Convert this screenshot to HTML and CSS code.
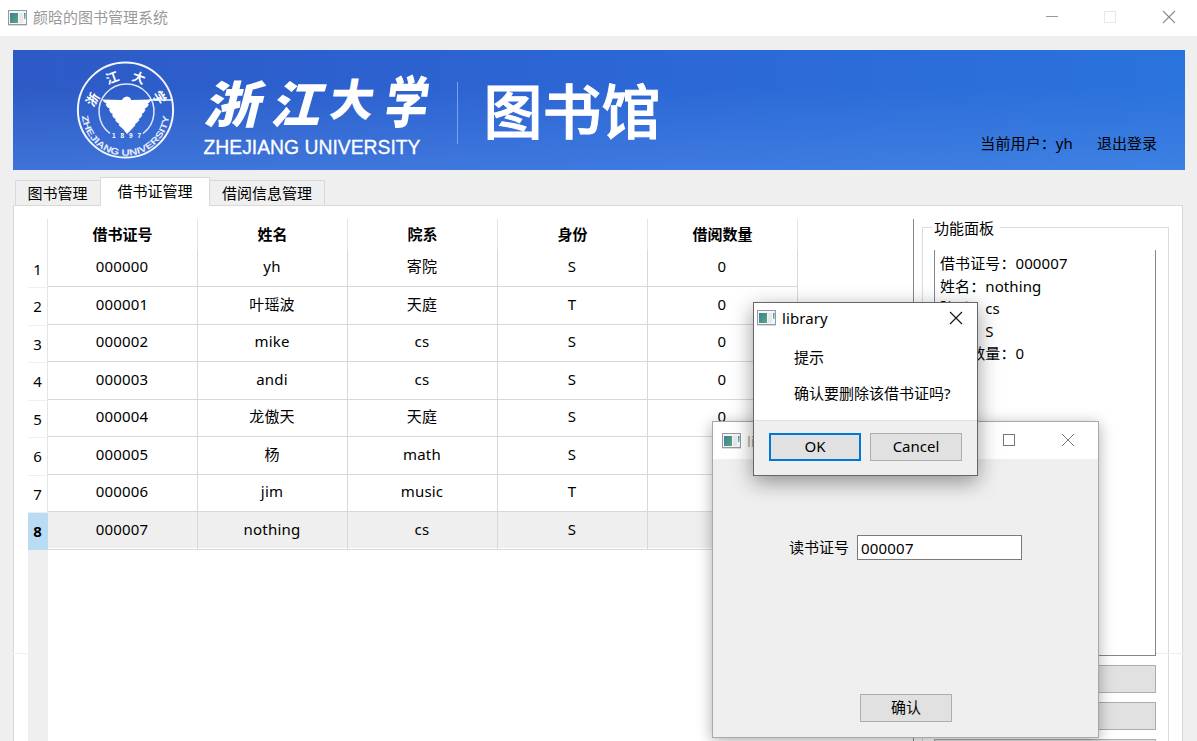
FILE: index.html
```html
<!DOCTYPE html>
<html lang="zh-CN">
<head>
<meta charset="utf-8">
<title>颜晗的图书管理系统</title>
<link rel="stylesheet" href="styles.css">
</head>
<body>
<svg class="defs" width="0" height="0">
  <defs>
    <linearGradient id="pane" x1="0" y1="0" x2="1" y2="1"><stop offset="0" stop-color="#3c7f9c"/><stop offset="1" stop-color="#5ca679"/></linearGradient>
    <linearGradient id="bar" x1="0" y1="0" x2="0" y2="1"><stop offset="0" stop-color="#3f86b8"/><stop offset="1" stop-color="#78c29a"/></linearGradient>
    <symbol id="app-icon" viewBox="0 0 19 16">
      <rect x="0.5" y="0.5" width="18" height="14" fill="#f5f6f8" stroke="#9299a5"/>
      <rect x="0" y="15" width="19" height="1" fill="#d9dbdf"/>
      <rect x="2" y="3" width="8" height="10" fill="url(#pane)"/>
      <rect x="11" y="3" width="4" height="10" fill="#e6e8ea"/>
      <rect x="16" y="3" width="1.5" height="6" fill="url(#bar)"/>
    </symbol>
  </defs>
</svg>
<div class="app">
  <header class="titlebar">
    <svg class="app-icon"><use href="#app-icon"/></svg>
    <span class="title">颜晗的图书管理系统</span>
    <svg class="controls" width="140" height="36" fill="none">
      <path d="M6 16.5h12" stroke="#999"/>
      <rect x="64.500" y="11.500" width="11" height="11" stroke="#e8e8e8"/>
      <path d="M123 11l12 12M135 11l-12 12" stroke="#8c8c8c" stroke-width="1.1"/>
    </svg>
  </header>
  <main class="content">
    <section class="banner">
      <svg class="logo" width="700" height="120" fill="#fff">
        <defs><path id="ring" d="M68.700 62A43.800 43.800 0 0 0 156.300 62"/></defs>
        <circle cx="112.500" cy="60" r="47.600" fill="none" stroke="#f3f6fc" stroke-width="2"/>
        <path d="M97 83.500A27.500 27.500 0 1 1 130 83.500" fill="none" stroke="#dfe8f9" stroke-width="1.500"/>
        <path d="M89 49.500L109 50Q110 47 114 46.500Q118 47 118 50L138 49.500Q137 53 134.500 54L136 54.500Q134 58 131.500 59L132.500 60Q131 63 128.500 64L129.500 65Q128 68 125.500 69L126.500 70Q124 73 122 74L122.500 75L118 80L114 84L110 79L105.500 75L106.500 74Q103 72 102 70L103 69Q100 68 99 65L100 64Q97 63 96 60L97 59Q94 58 92.500 54.500L94 54Q91 53 89 49.500Z"/>
        <path d="M136 50h24" stroke="#fff" stroke-width="1.500"/>
        <text class="ring-text"><textPath href="#ring" startOffset="4" textLength="129" lengthAdjust="spacingAndGlyphs">ZHEJIANG UNIVERSITY</textPath></text>
        <g class="ring-han">
          <text transform="translate(79 49) rotate(-58)" text-anchor="middle" dominant-baseline="central">浙</text>
          <text transform="translate(99 27) rotate(-20)" text-anchor="middle" dominant-baseline="central">江</text>
          <text transform="translate(126 27) rotate(20)" text-anchor="middle" dominant-baseline="central">大</text>
          <text transform="translate(147 47) rotate(58)" text-anchor="middle" dominant-baseline="central">学</text>
        </g>
        <text class="year" x="99" y="88" textLength="29">1897</text>
        <g class="brush">
          <text transform="translate(190 73) skewX(-14) scale(1.120 1)">浙</text>
          <text transform="translate(256 73) skewX(-16)">江</text>
          <text transform="translate(315 66) skewX(-8)" class="brush-small">大</text>
          <text transform="translate(370 73) skewX(-8) scale(.86 1.120)">学</text>
        </g>
        <text class="latin" x="190.500" y="104" textLength="217" lengthAdjust="spacingAndGlyphs">ZHEJIANG UNIVERSITY</text>
        <rect x="444" y="32" width="1" height="62" fill="#7ba3ea"/>
        <text class="library" x="470.500" y="83.500" textLength="177">图书馆</text>
      </svg>
      <div class="user"><span>当前用户：yh</span><span>退出登录</span></div>
    </section>
    <nav class="tabs">
      <div class="tab tab-books">图书管理</div>
      <div class="tab active">借书证管理</div>
      <div class="tab tab-loans">借阅信息管理</div>
    </nav>
    <section class="pane">
      <i class="seam seam-left"></i><i class="seam seam-right"></i>
      <div class="table">
        <div class="index">
          <div class="corner"></div>
          <div>1</div><div class="tall">2</div><div>3</div><div class="tall">4</div><div>5</div><div class="tall">6</div><div>7</div><div class="current">8</div>
          <div class="rest"></div>
        </div>
        <div class="grid">
          <div class="row head"><b>借书证号</b><b>姓名</b><b>院系</b><b>身份</b><b>借阅数量</b></div>
          <div class="row"><span>000000</span><span>yh</span><span>寄院</span><span>S</span><span>0</span></div>
          <div class="row tall"><span>000001</span><span>叶瑶波</span><span>天庭</span><span>T</span><span>0</span></div>
          <div class="row"><span>000002</span><span>mike</span><span>cs</span><span>S</span><span>0</span></div>
          <div class="row tall"><span>000003</span><span>andi</span><span>cs</span><span>S</span><span>0</span></div>
          <div class="row"><span>000004</span><span>龙傲天</span><span>天庭</span><span>S</span><span>0</span></div>
          <div class="row tall"><span>000005</span><span>杨</span><span>math</span><span>S</span><span>0</span></div>
          <div class="row"><span>000006</span><span>jim</span><span>music</span><span>T</span><span>0</span></div>
          <div class="row tall selected"><span>000007</span><span>nothing</span><span>cs</span><span>S</span><span>0</span></div>
        </div>
      </div>
      <aside class="panel">
        <h2 class="legend">功能面板</h2>
        <div class="details">
          <p>借书证号：000007</p><p>姓名：nothing</p><p>院系：cs</p><p>身份：S</p><p>借阅数量：0</p>
        </div>
        <div class="button"></div><div class="button"></div><div class="button"></div>
      </aside>
    </section>
  </main>

  <div class="window form-window">
    <div class="window-bar">
      <svg class="app-icon"><use href="#app-icon"/></svg><span class="window-title">library</span>
      <svg class="window-controls" width="100" height="37" fill="none" stroke="#777"><rect x="5.500" y="12.500" width="11" height="11"/><path d="M64 12l12 12M76 12l-12 12"/></svg>
    </div>
    <div class="form-row"><label>读书证号</label><div class="input">000007</div></div>
    <div class="button confirm">确认</div>
  </div>

  <div class="window message">
    <div class="message-bar">
      <svg class="app-icon"><use href="#app-icon"/></svg><span>library</span>
      <svg class="close" width="14" height="14" stroke="#111" stroke-width="1.100"><path d="M1 1l12 12M13 1L1 13"/></svg>
    </div>
    <p class="message-title">提示</p>
    <p class="message-text">确认要删除该借书证吗?</p>
    <div class="actions"><div class="button primary">OK</div><div class="button">Cancel</div></div>
  </div>
</div>
</body>
</html>
```

FILE: styles.css
```css
* { box-sizing: border-box; }
body { margin: 0; font: 15px/22px "Noto Sans", "Noto Sans CJK SC", sans-serif; color: #000; }
p, h2 { margin: 0; font-size: 15px; font-weight: 400; }
.defs { position: absolute; }
.app { position: relative; width: 1197px; height: 741px; overflow: hidden; background: #efefef; display: flex; flex-direction: column; }
.titlebar { height: 36px; flex: none; background: #fff; display: flex; align-items: center; padding-left: 8px; }
.app-icon { width: 19px; height: 16px; flex: none; }
.title { margin-left: 6px; color: #999; line-height: 34px; height: 36px; }
.controls { margin-left: auto; margin-right: 17px; }
.content { flex: none; padding: 14px 12px 0 13px; }

.banner { height: 120px; display: flex; justify-content: space-between; background: linear-gradient(to bottom, rgba(85,145,235,0) 30%, rgba(85,145,235,.45)), linear-gradient(90deg, #2d5ac6, #2c66d5 50%, #2b73dc); }
.logo { flex: none; }
.user { display: flex; gap: 24px; margin: 82px 28px 0 0; white-space: nowrap; }
.user span:first-child { letter-spacing: .1px; }
.ring-text { font: 700 9px "Liberation Sans", sans-serif; fill: #e6edfb; }
.ring-han { font: 700 13px "Noto Sans CJK SC", sans-serif; }
.year { font: 700 6.500px "Liberation Sans", sans-serif; }
.brush { font: 900 50px "Noto Sans CJK SC", sans-serif; }
.brush-small { font-size: 44px; }
.latin { font: 20.500px "Liberation Sans", sans-serif; stroke: #fff; stroke-width: .3px; }
.library { font: 500 59px "Noto Sans CJK SC", sans-serif; stroke: #fff; stroke-width: 1px; }

.tabs { height: 36px; padding: 7px 0 0 2px; display: flex; align-items: flex-end; position: relative; z-index: 1; margin-bottom: -1px; }
.tab { height: 26px; border: 1px solid #d9d9d9; text-align: center; line-height: 25px; }
.tab-books { width: 86px; border-right: 0; padding-right: 2px; }
.active { width: 110px; height: 29px; margin-left: -1px; background: #fff; border-bottom: 0; line-height: 26px; }
.tab-loans { width: 115px; border-left: 0; }

.pane { position: relative; width: 1170px; height: 560px; background: #fff; border: 1px solid #d9d9d9; padding: 13px 13px 0 14px; display: flex; justify-content: space-between; }
.seam { position: absolute; top: 447px; height: 1px; background: #efefef; }
.seam-left { left: -1px; width: 14px; }
.seam-right { right: -1px; width: 27px; z-index: 1; }
.table { width: 886px; display: flex; border-right: 1px solid #828790; }
.index { width: 20px; display: flex; flex-direction: column; text-align: center; }
.index div { height: 37px; flex: none; border-bottom: 1px solid #efefef; border-right: 1px solid #e5e5e5; line-height: 36px; }
.index .tall { height: 38px; line-height: 37px; }
.index .corner { height: 32px; border-bottom: 0; }
.index .current { background: #b9dcf4; border-color: #b9dcf4; font-weight: 700; }
.index .rest { flex: 1; border: 0; background: #efefef; }
.row { display: grid; grid-template-columns: repeat(5, 150px); height: 37px; text-align: center; }
.tall { height: 38px; }
.row > * { border-right: 1px solid #d8d8d8; border-bottom: 1px solid #d8d8d8; line-height: 32px; }
.row > span { letter-spacing: .2px; padding-right: 1px; }
.tall > * { line-height: 34px; }
.head { height: 31px; }
.head > * { border-bottom: 0; border-color: #e5e5e5; line-height: 31px; }
.selected > * { background: #efefef; box-shadow: inset 0 -1px #fff; }

.panel { width: 247px; border: 1px solid #dcdcdc; margin: 8px 0 0; padding: 0 12px 0 11px; }
.legend { width: 68px; height: 22px; margin: -11px 0 11px -2px; padding-left: 2px; background: #fff; white-space: nowrap; }
.details { height: 406px; margin-bottom: 9px; border: 1px solid #828790; border-top: 0; padding: 2px 5px; line-height: 22.500px; letter-spacing: .1px; }
.button { height: 28px; border: 1px solid #adadad; background: #e1e1e1; text-align: center; line-height: 24px; margin-bottom: 9px; }

.window { position: absolute; }
.form-window { left: 712px; top: 421px; width: 387px; height: 317px; border: 1px solid #a8a8a8; background: #efefef; box-shadow: 0 3px 14px rgba(0,0,0,.32); }
.window-bar { height: 37px; background: #fff; display: flex; align-items: center; padding-left: 9px; color: #b0a49a; }
.window-title { margin-left: 6px; }
.window-controls { margin-left: auto; }
.form-row { display: flex; align-items: center; padding: 76px 0 0 76px; }
.form-row label { width: 68px; height: 24px; }
.input { width: 165px; height: 25px; border: 1px solid #7a7a7a; background: #fff; padding-left: 3px; line-height: 25px; letter-spacing: .2px; }
.confirm { width: 92px; margin: 134px 0 0 147px; }
.message { left: 753px; top: 302px; width: 225px; height: 174px; border: 1px solid #666; background: #fff; box-shadow: 0 6px 20px rgba(0,0,0,.4); display: flex; flex-direction: column; }
.message-bar { height: 30px; display: flex; align-items: center; padding: 0 14px 0 3px; }
.message-bar span { margin-left: 6px; letter-spacing: .1px; }
.close { margin-left: auto; }
.message-title { padding: 13px 0 0 40px; }
.message-text { padding: 14px 0 0 40px; white-space: nowrap; }
.actions { margin-top: auto; height: 55px; border-top: 1px solid #dfdfdf; background: #efefef; display: flex; gap: 9px; padding: 12px 15px; }
.actions .button { width: 92px; }
.actions .primary { border: 2px solid #0078d7; line-height: 22px; }
```
